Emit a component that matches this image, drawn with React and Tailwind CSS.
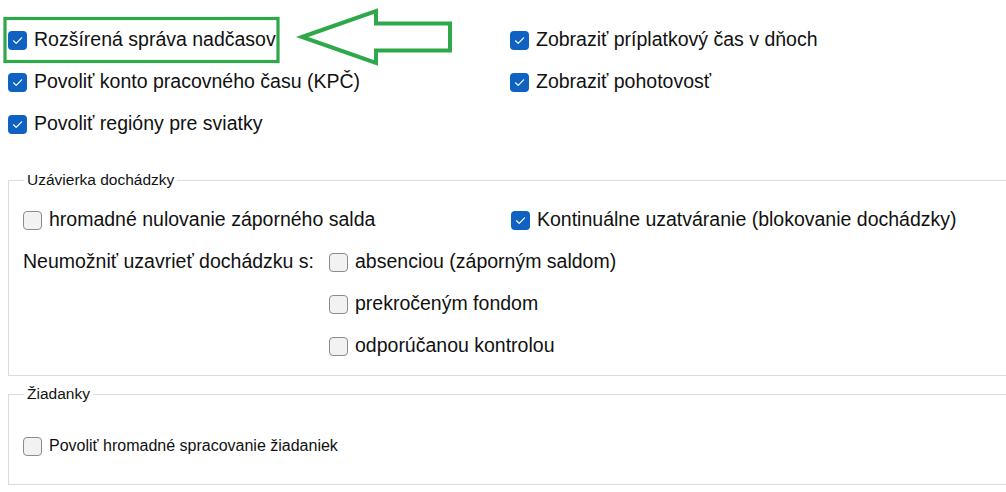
import React from "react";

function Box({ checked }) {
  if (checked) {
    return (
      <span className="flex h-[19px] w-[19px] shrink-0 items-center justify-center rounded-[4px] bg-[#0f62c2]">
        <svg width="19" height="19" viewBox="0 0 19 19">
          <path d="M5.5 9.8 L8.2 12.4 L13.6 6.8" fill="none" stroke="#ffffff" strokeWidth="1.2" strokeLinecap="round" strokeLinejoin="round" />
        </svg>
      </span>
    );
  }
  return <span className="h-[19px] w-[19px] shrink-0 rounded-[4px] border border-[#8c8c8c] bg-[#f2f2f2]" />;
}

function Check({ checked, label, size = "text-[19.5px]", gap = "gap-[7px]" }) {
  return (
    <div className={`flex h-[42px] items-center ${gap}`}>
      <Box checked={checked} />
      <span className={`${size} whitespace-nowrap text-[#111]`}>{label}</span>
    </div>
  );
}

export default function App() {
  return (
    <div
      className="relative h-[492px] w-[1006px] overflow-hidden bg-white"
      style={{ fontFamily: '"Liberation Sans", Arial, sans-serif' }}
    >
      <div className="grid grid-cols-[502px_1fr] pl-[8px] pt-[19px]">
        <div className="flex flex-col">
          <Check checked label="Rozšírená správa nadčasov" />
          <Check checked label="Povoliť konto pracovného času (KPČ)" />
          <Check checked label="Povoliť regióny pre sviatky" />
        </div>
        <div className="flex flex-col">
          <Check checked label="Zobraziť príplatkový čas v dňoch" />
          <Check checked label="Zobraziť pohotovosť" />
        </div>
      </div>

      <fieldset className="ml-[8px] mt-[26px] w-[1020px] border border-[#dcdcdc] pb-[8px] pl-[14px]">
        <legend className="ml-[1px] px-[3px] text-[15.5px] leading-[18px] text-[#111]">Uzávierka dochádzky</legend>
        <div className="grid grid-cols-[488px_1fr] pt-[10px]">
          <Check checked={false} label="hromadné nulovanie záporného salda" />
          <Check checked label="Kontinuálne uzatváranie (blokovanie dochádzky)" />
        </div>
        <div className="flex">
          <div className="flex h-[42px] w-[306px] items-center text-[19.5px] text-[#111] whitespace-nowrap">
            Neumožniť uzavrieť dochádzku s:
          </div>
          <div className="flex flex-col">
            <Check checked={false} label="absenciou (záporným saldom)" />
            <Check checked={false} label="prekročeným fondom" />
            <Check checked={false} label="odporúčanou kontrolou" />
          </div>
        </div>
      </fieldset>

      <fieldset className="ml-[8px] mt-[9px] w-[1020px] border border-[#dcdcdc] pl-[14px] pb-[17px]">
        <legend className="ml-[1px] px-[3px] text-[15.5px] leading-[18px] text-[#111]">Žiadanky</legend>
        <div className="pt-[22px]">
          <Check checked={false} label="Povoliť hromadné spracovanie žiadaniek" size="text-[16px]" />
        </div>
      </fieldset>

      <svg className="pointer-events-none absolute left-0 top-0" width="470" height="72" viewBox="0 0 470 72">
        <rect x="5" y="18.5" width="273" height="43" fill="none" stroke="#2ea84a" strokeWidth="3.2" />
        <polygon
          points="302,37 376,11 376,23.5 450,23.5 450,50.5 376,50.5 376,63"
          fill="none"
          stroke="#2ea84a"
          strokeWidth="4"
          strokeLinejoin="miter"
        />
      </svg>
    </div>
  );
}
